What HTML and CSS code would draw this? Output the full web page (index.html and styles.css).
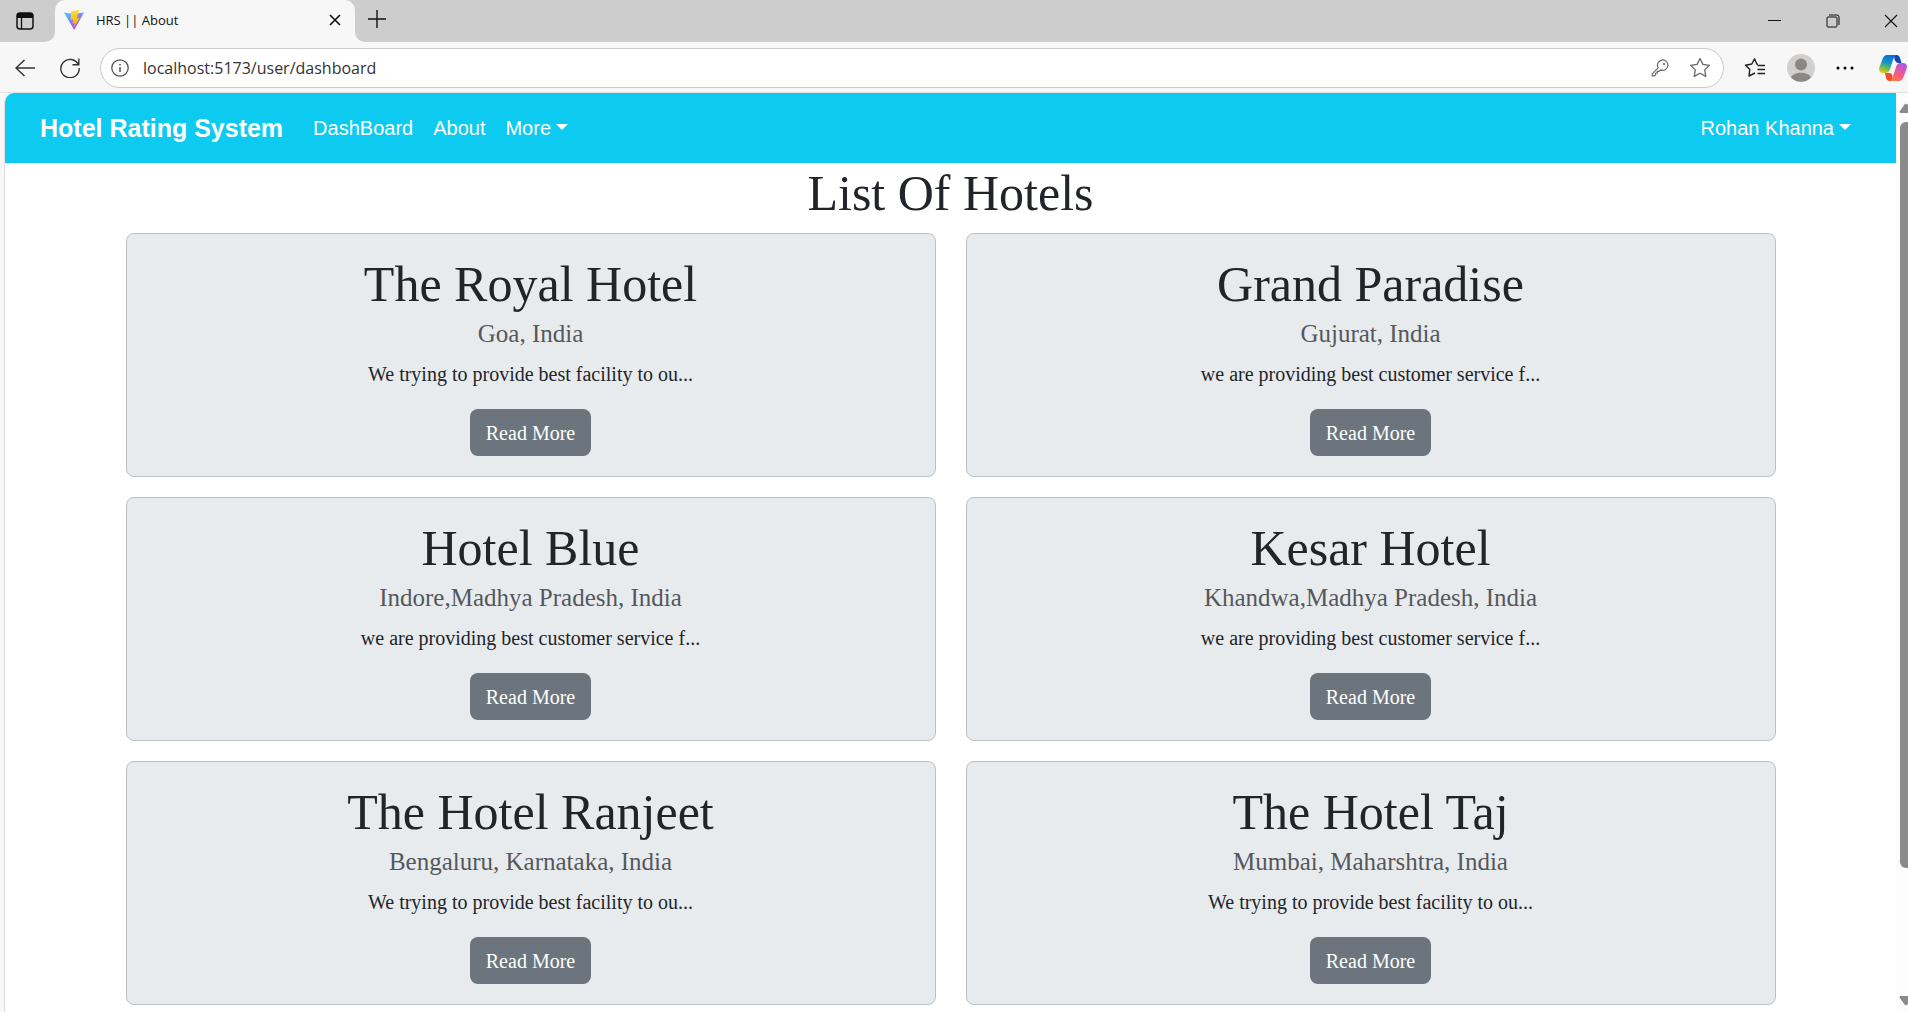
FILE: index.html
```html
<!DOCTYPE html>
<html lang="en">
<head>
<meta charset="utf-8">
<meta name="viewport" content="width=device-width, initial-scale=1">
<title>HRS || About</title>
<link rel="stylesheet" href="styles.css">
</head>
<body>
<div class="browser">
  <header class="tab-strip">
    <button class="icon-btn tab-actions" aria-label="Tab actions">
      <svg width="18" height="18" viewBox="0 0 18 18"><rect x="1" y="1" width="16" height="16" rx="3" fill="none" stroke="#111" stroke-width="1.5"/><path d="M1 6V4a3 3 0 0 1 3-3h10a3 3 0 0 1 3 3v2z" fill="#111"/><path d="M5.500 5v12" stroke="#111" stroke-width="1.300"/></svg>
    </button>
    <div class="tab">
      <svg class="favicon" width="20" height="20" viewBox="0 0 20 20"><defs><linearGradient id="vite-body" x1="0" y1="0" x2="0.700" y2="1"><stop offset="0" stop-color="#41d1ff"/><stop offset="1" stop-color="#bd34fe"/></linearGradient><linearGradient id="vite-bolt" x1="0" y1="0" x2="0" y2="1"><stop offset="0" stop-color="#ffdd35"/><stop offset="1" stop-color="#ffa800"/></linearGradient></defs><path d="M0 2.500 10 4l10-1.500L10.200 20z" fill="url(#vite-body)"/><path d="M15 0 7.300 1.300 6.500 10l2.900-.500-.900 4 2.200-.600-1 4.600 6-9.700-3 .600z" fill="url(#vite-bolt)"/></svg>
      <span class="tab-title">HRS || About</span>
      <button class="icon-btn tab-close" aria-label="Close tab">
        <svg width="12" height="12" viewBox="0 0 12 12"><path d="M1 1l10 10M11 1 1 11" stroke="#111" stroke-width="1.600"/></svg>
      </button>
    </div>
    <button class="icon-btn new-tab" aria-label="New tab">
      <svg width="18" height="18" viewBox="0 0 18 18"><path d="M9 0v18M0 9h18" stroke="#111" stroke-width="1.400"/></svg>
    </button>
    <div class="window-controls">
      <button class="icon-btn" aria-label="Minimize"><svg width="14" height="14" viewBox="0 0 14 14"><path d="M0 6.500h13" stroke="#111"/></svg></button>
      <button class="icon-btn" aria-label="Restore"><svg width="14" height="14" viewBox="0 0 14 14"><rect x="1" y="3" width="10" height="10" rx="1" fill="none" stroke="#111"/><path d="M3 1h8q2 0 2 2v8" fill="none" stroke="#111"/></svg></button>
      <button class="icon-btn" aria-label="Close window"><svg width="14" height="14" viewBox="0 0 14 14"><path d="M1 1l12 12M13 1 1 13" stroke="#111" stroke-width="1.100"/></svg></button>
    </div>
  </header>

  <div class="toolbar">
    <button class="icon-btn" aria-label="Back"><svg width="20" height="18" viewBox="0 0 20 18"><path d="M9.500 1 1 9l8.500 8M1 9h19" fill="none" stroke="#333" stroke-width="1.400"/></svg></button>
    <button class="icon-btn reload" aria-label="Reload"><svg width="20" height="20" viewBox="0 0 20 20"><path d="M18.500 7A9.200 9.200 0 1 0 19.200 10M18.800 0.500V6.800H12.500" fill="none" stroke="#333" stroke-width="1.400"/></svg></button>
    <div class="address-bar">
      <svg width="18" height="18" viewBox="0 0 18 18"><circle cx="9" cy="9" r="8.200" fill="none" stroke="#555" stroke-width="1.300"/><path d="M9 8v5M9 5v1.600" stroke="#555" stroke-width="1.500"/></svg>
      <input class="address" type="text" value="localhost:5173/user/dashboard" aria-label="Address">
      <button class="icon-btn" aria-label="Saved passwords"><svg width="18" height="18" viewBox="0 0 18 18"><path d="M7.200 8.800A5.200 5.200 0 1 1 9.500 10.900L8 12.400H6.300V14H4.700V15.600L3.600 16.800H1.200V14.800z" fill="none" stroke="#666" stroke-width="1.200" stroke-linejoin="round"/><circle cx="13" cy="5" r="1.100" fill="#666"/></svg></button>
      <button class="icon-btn star" aria-label="Add to favorites"><svg width="22" height="21" viewBox="0 0 22 21"><path d="M11 1.500 13.900 7.400 20.400 8.300 15.700 12.900 16.800 19.400 11 16.300 5.200 19.400 6.300 12.900 1.600 8.300 8.100 7.400z" fill="none" stroke="#666" stroke-width="1.300" stroke-linejoin="round"/></svg></button>
    </div>
    <div class="toolbar-actions">
      <button class="icon-btn" aria-label="Favorites"><svg width="22" height="21" viewBox="0 0 22 21"><path d="M14 7.400 12.800 7 10.500 1.800 7.800 7 1.500 8.200 5.800 12.600 5 19 11 16" fill="none" stroke="#222" stroke-width="1.400" stroke-linejoin="round"/><path d="M13.500 8.500H21M13.500 12.500H21M13.500 16.500H21" stroke="#222" stroke-width="1.400"/></svg></button>
      <button class="icon-btn" aria-label="Profile"><svg width="28" height="28" viewBox="0 0 28 28"><circle cx="14" cy="14" r="14" fill="#d2d0ce"/><circle cx="14" cy="10.500" r="6" fill="#8a8886"/><path d="M4 23.500C6 17 22 17 24 23.500A14 14 0 0 1 4 23.500z" fill="#8a8886"/></svg></button>
      <button class="icon-btn" aria-label="Settings and more"><svg width="18" height="4" viewBox="0 0 18 4"><circle cx="2" cy="2" r="1.500"/><circle cx="9" cy="2" r="1.500"/><circle cx="16" cy="2" r="1.500"/></svg></button>
      <button class="icon-btn copilot" aria-label="Copilot"><svg width="28" height="26" viewBox="0 0 28 26"><defs><linearGradient id="cp-left" x1="0.500" y1="0" x2="0.200" y2="1"><stop offset="0" stop-color="#0b6fe0"/><stop offset="0.400" stop-color="#1795c8"/><stop offset="0.700" stop-color="#6cbb52"/><stop offset="1" stop-color="#f3c80a"/></linearGradient><linearGradient id="cp-right" x1="0.800" y1="0" x2="0.200" y2="1"><stop offset="0" stop-color="#a856f0"/><stop offset="0.500" stop-color="#ee5796"/><stop offset="1" stop-color="#ff7a3a"/></linearGradient></defs><path d="M15 0h3q2 0 3 3l1.500 5h-3q-3 0-4-4z" fill="#1246b8"/><path d="M13 26h-3q-2 0-3-3l-1-5h4q3 0 3.500 3z" fill="#f04d28"/><path d="M8 0h9q-2 1-3 5l-3 9q-1 4-5 4H4q-5 0-3.500-6l3-8Q5 0 8 0z" fill="url(#cp-left)"/><path d="M20 26h-9q2-1 3-5l3-9q1-4 5-4h2q5 0 3.500 6l-3 8Q23 26 20 26z" fill="url(#cp-right)"/></svg></button>
    </div>
  </div>

  <div class="viewport">
    <div class="page">
      <nav class="navbar">
        <a class="brand" href="#">Hotel Rating System</a>
        <a class="nav-link" href="#">DashBoard</a>
        <a class="nav-link" href="#">About</a>
        <a class="nav-link dropdown" href="#">More</a>
        <a class="nav-link dropdown user" href="#">Rohan Khanna</a>
      </nav>
      <main class="container">
        <h1>List Of Hotels</h1>
        <div class="hotels">
          <article class="card">
            <h2>The Royal Hotel</h2>
            <h3>Goa, India</h3>
            <p>We trying to provide best facility to ou...</p>
            <button class="btn">Read More</button>
          </article>
          <article class="card">
            <h2>Grand Paradise</h2>
            <h3>Gujurat, India</h3>
            <p>we are providing best customer service f...</p>
            <button class="btn">Read More</button>
          </article>
          <article class="card">
            <h2>Hotel Blue</h2>
            <h3>Indore,Madhya Pradesh, India</h3>
            <p>we are providing best customer service f...</p>
            <button class="btn">Read More</button>
          </article>
          <article class="card">
            <h2>Kesar Hotel</h2>
            <h3>Khandwa,Madhya Pradesh, India</h3>
            <p>we are providing best customer service f...</p>
            <button class="btn">Read More</button>
          </article>
          <article class="card">
            <h2>The Hotel Ranjeet</h2>
            <h3>Bengaluru, Karnataka, India</h3>
            <p>We trying to provide best facility to ou...</p>
            <button class="btn">Read More</button>
          </article>
          <article class="card">
            <h2>The Hotel Taj</h2>
            <h3>Mumbai, Maharshtra, India</h3>
            <p>We trying to provide best facility to ou...</p>
            <button class="btn">Read More</button>
          </article>
        </div>
      </main>
    </div>
    <div class="scrollbar" aria-hidden="true">
      <svg width="12" height="10" viewBox="0 0 12 10"><path d="M4 10 3.500 8.500 8.500 1.500Q10 0 11.500 1.500L17 10z" fill="#8b8b8b"/></svg>
      <div class="track"><div class="thumb"></div></div>
      <svg width="12" height="10" viewBox="0 0 12 10"><path d="M4 0 3.500 1.500 8.500 8.500Q10 10 11.500 8.500L17 0z" fill="#8b8b8b"/></svg>
    </div>
  </div>
</div>
</body>
</html>
```

FILE: styles.css
```css
* {
  box-sizing: border-box;
}

body {
  margin: 0;
  background: #f7f7f7;
  color: #212529;
  font-family: "Liberation Serif", "Times New Roman", serif;
  font-size: 20px;
  line-height: 30px;
}

h1, h2, h3, p {
  margin: 0;
  font-weight: 400;
}

a {
  color: inherit;
  text-decoration: none;
}

.browser {
  display: flex;
  flex-direction: column;
  height: 100vh;
  overflow: hidden;
}

.icon-btn {
  display: flex;
  flex: none;
  align-items: center;
  justify-content: center;
  padding: 0;
  border: 0;
  background: none;
}

/* Tab strip */
.tab-strip {
  display: flex;
  flex: none;
  height: 42px;
  background: #f7f7f7;
}

.tab-actions {
  width: 55px;
  padding-right: 5px;
  border-radius: 0 0 10px 0;
  background: #cdcdcd;
}

.tab {
  display: flex;
  flex: none;
  align-items: center;
  width: 300px;
  padding: 0 14px 2px 9px;
  background: linear-gradient(#cdcdcd, #cdcdcd) top / 100% 10px no-repeat;
  position: relative;
  z-index: 0;
}

.tab::before {
  content: "";
  position: absolute;
  z-index: -1;
  inset: 0;
  border-radius: 10px 10px 0 0;
  background: #f7f7f7;
}

.tab-title {
  flex: 1;
  margin-left: 12px;
  color: #111;
  font: 13px/20px "Open Sans", "Noto Sans", sans-serif;
}

.new-tab {
  width: 44px;
  padding: 0 0 4px;
  border-radius: 0 0 0 10px;
  background: #cdcdcd;
}

.window-controls {
  display: flex;
  flex: 1;
  gap: 44px;
  justify-content: flex-end;
  padding-right: 10px;
  background: #cdcdcd;
}

/* Toolbar */
.toolbar {
  display: flex;
  flex: none;
  align-items: center;
  height: 51px;
  padding: 1px 1px 0 15px;
  border-bottom: 1px solid #e2e2e2;
}

.reload {
  margin: 0 20px 0 25px;
}

.address-bar {
  display: flex;
  flex: 1;
  align-items: center;
  height: 40px;
  padding: 0 12px 0 10px;
  border: 1px solid #cbcbcb;
  border-radius: 20px;
  background: #fff;
}

.address {
  flex: 1;
  min-width: 0;
  margin-left: 14px;
  padding: 0;
  border: 0;
  outline: 0;
  background: none;
  color: #333;
  font: 16px/24px "Open Sans", "Noto Sans", sans-serif;
}

.star {
  margin-left: 20px;
}

.toolbar-actions {
  display: flex;
  flex: none;
  align-items: center;
  gap: 21px;
  padding-left: 20px;
}

.copilot {
  margin-left: 4px;
}

/* Page area */
.viewport {
  display: flex;
  flex: 1;
  min-height: 0;
  margin-left: 4px;
  border-left: 1px solid #dedede;
  border-radius: 10px 0 0 0;
  background: #fff;
  overflow: hidden;
}

.page {
  flex: 1;
  overflow: hidden;
}

.navbar {
  display: flex;
  align-items: center;
  padding: 10px 35px;
  background: #0dcaf0;
  color: #fff;
  font-family: "Liberation Sans", Arial, sans-serif;
}

.brand {
  margin-right: 20px;
  font-size: 25px;
  font-weight: 700;
}

.nav-link {
  padding: 10px;
}

.user {
  margin-left: auto;
}

.dropdown::after {
  content: "";
  display: inline-block;
  margin-left: 5px;
  border: 6px solid transparent;
  border-top-color: #fff;
  border-bottom: 0;
  vertical-align: 5px;
}

.container {
  max-width: 1680px;
  margin: 0 auto;
  padding: 0 15px;
  text-align: center;
}

h1, h2 {
  margin-bottom: 10px;
  font-size: 50px;
  line-height: 60px;
}

.hotels {
  display: grid;
  grid-template-columns: 1fr 1fr;
  gap: 20px 30px;
}

.card {
  padding: 20px;
  border: 1px solid #bdc0c3;
  border-radius: 8px;
  background: #e8ebee;
}

h3 {
  margin: -5px 0 10px;
  color: #54585c;
  font-size: 25px;
  line-height: 30px;
}

.btn {
  display: block;
  margin: 20px auto 0;
  padding: 9px 16px 8px;
  border: 0;
  border-radius: 8px;
  background: #6c757d;
  color: #fff;
  font: inherit;
}

/* Scrollbar */
.scrollbar {
  display: flex;
  flex: none;
  flex-direction: column;
  width: 12px;
  padding: 10px 0 6px;
  background: #fcfcfc;
}

.track {
  flex: 1;
  padding: 9px 0 0 4px;
}

.thumb {
  height: 85.3%;
  border-radius: 6px 0 0 6px;
  background: #8b8b8b;
}
```
